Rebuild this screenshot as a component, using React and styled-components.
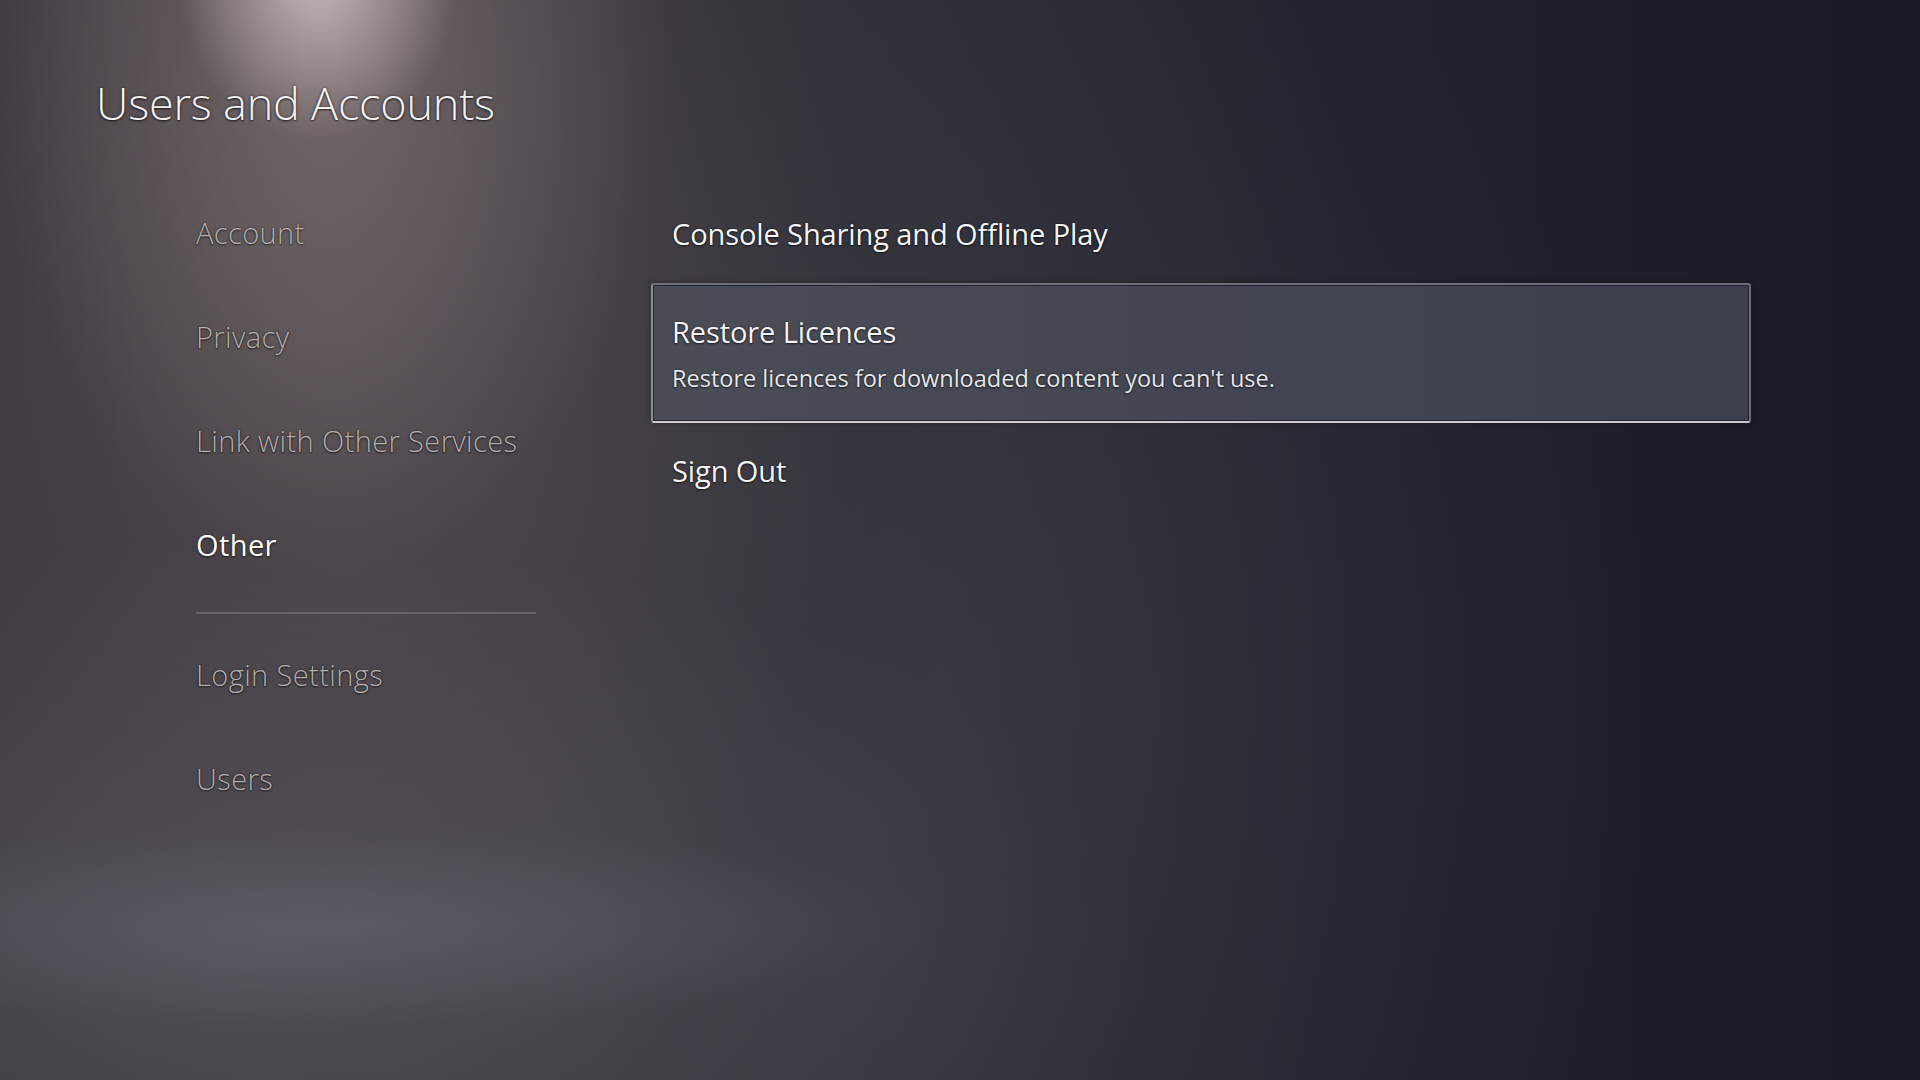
import React from 'react';
import styled, { createGlobalStyle } from 'styled-components';

const GlobalStyle = createGlobalStyle`
  html, body {
    margin: 0;
    padding: 0;
    background: #181824;
  }
  * {
    box-sizing: border-box;
  }
`;

const Page = styled.div`
  width: 1920px;
  height: 1080px;
  overflow: hidden;
  font-family: 'Open Sans', 'Noto Sans', sans-serif;
  color: #fff;
  background:
    radial-gradient(ellipse 140px 160px at 318px -20px, rgba(210, 195, 195, 0.85), rgba(210, 195, 195, 0) 100%),
    radial-gradient(ellipse 340px 540px at 330px 40px, rgba(155, 136, 136, 0.5), rgba(155, 136, 136, 0) 100%),
    radial-gradient(ellipse 520px 900px at 330px 300px, rgba(112, 102, 104, 0.45), rgba(112, 102, 104, 0) 100%),
    radial-gradient(ellipse 620px 100px at 330px 925px, rgba(105, 112, 128, 0.4), rgba(105, 112, 128, 0) 100%),
    radial-gradient(ellipse 900px 420px at 250px 960px, rgba(88, 88, 96, 0.65), rgba(88, 88, 96, 0) 100%),
    radial-gradient(ellipse 700px 900px at 950px 700px, rgba(70, 70, 80, 0.45), rgba(70, 70, 80, 0) 100%),
    linear-gradient(to right, #38353a 0%, #36343a 30%, #2d2d36 50%, #22222e 70%, #1a1a26 100%);
`;

const Title = styled.h1`
  margin: 0;
  padding: 80px 0 0 96px;
  font-size: 45px;
  line-height: 1;
  font-weight: 300;
  letter-spacing: -0.2px;
  color: #f4f2f2;
  text-shadow: 0 0 3px rgba(0, 0, 0, 0.55), 0 1px 2px rgba(0, 0, 0, 0.6);
`;

const Content = styled.div`
  display: grid;
  grid-template-columns: 340px 1100px;
  column-gap: 115px;
  padding: 93px 0 0 196px;
  align-items: start;
`;

const Menu = styled.nav`
  display: flex;
  flex-direction: column;
`;

const MenuItem = styled.div`
  font-size: 29px;
  line-height: 1;
  height: 29px;
  letter-spacing: 0.4px;
  margin-bottom: ${p => (p.$last ? 0 : 75)}px;
  color: ${p => (p.$active ? '#ffffff' : 'rgba(212, 206, 206, 0.82)')};
  font-weight: ${p => (p.$active ? 400 : 300)};
  text-shadow: 0 0 2px rgba(0, 0, 0, 0.55), 0 1px 2px rgba(0, 0, 0, 0.5);
  white-space: nowrap;
`;

const Divider = styled.div`
  height: 2px;
  background: rgba(140, 135, 138, 0.45);
  margin: -22px 0 46px;
`;

const Options = styled.div`
  display: flex;
  flex-direction: column;
`;

const OptionLabel = styled.div`
  font-size: 29px;
  line-height: 1;
  font-weight: 400;
  letter-spacing: -0.1px;
  color: #f6f6f8;
  text-shadow: 0 0 2px rgba(0, 0, 0, 0.6), 0 1px 2px rgba(0, 0, 0, 0.5);
  white-space: nowrap;
`;

const PlainOption = styled.div`
  padding-left: 21px;
  height: 30px;
  margin: ${p => p.$margin};
`;

const Card = styled.div`
  display: flex;
  flex-direction: column;
  gap: 21px;
  height: 140px;
  padding: 32px 19px 0;
  border: 2px solid #6c6e78;
  border-bottom-color: #d2cad2;
  border-left-color: #8e8e96;
  border-radius: 3px;
  background: linear-gradient(to right, #4a4c56 0%, #434652 50%, #3c404e 100%);
  box-shadow: inset 0 0 0 1px rgba(22, 22, 30, 0.75), 0 0 6px rgba(0, 0, 0, 0.35);
`;

const Description = styled.div`
  font-size: 23.5px;
  line-height: 1;
  color: #e8e8ec;
  text-shadow: 0 0 2px rgba(0, 0, 0, 0.6), 0 1px 2px rgba(0, 0, 0, 0.5);
  white-space: nowrap;
`;

const menuItems = [
  { label: 'Account' },
  { label: 'Privacy' },
  { label: 'Link with Other Services' },
  { label: 'Other', active: true },
];

const userItems = ['Login Settings', 'Users'];

function App() {
  return (
    <Page>
      <GlobalStyle />
      <Title>Users and Accounts</Title>
      <Content>
        <Menu>
          {menuItems.map(item => (
            <MenuItem key={item.label} $active={item.active}>
              {item.label}
            </MenuItem>
          ))}
          <Divider />
          {userItems.map((label, i) => (
            <MenuItem key={label} $last={i === userItems.length - 1}>
              {label}
            </MenuItem>
          ))}
        </Menu>
        <Options>
          <PlainOption $margin="1px 0 34px">
            <OptionLabel>Console Sharing and Offline Play</OptionLabel>
          </PlainOption>
          <Card>
            <OptionLabel>Restore Licences</OptionLabel>
            <Description>Restore licences for downloaded content you can't use.</Description>
          </Card>
          <PlainOption $margin="33px 0 0">
            <OptionLabel>Sign Out</OptionLabel>
          </PlainOption>
        </Options>
      </Content>
    </Page>
  );
}

export default App;
